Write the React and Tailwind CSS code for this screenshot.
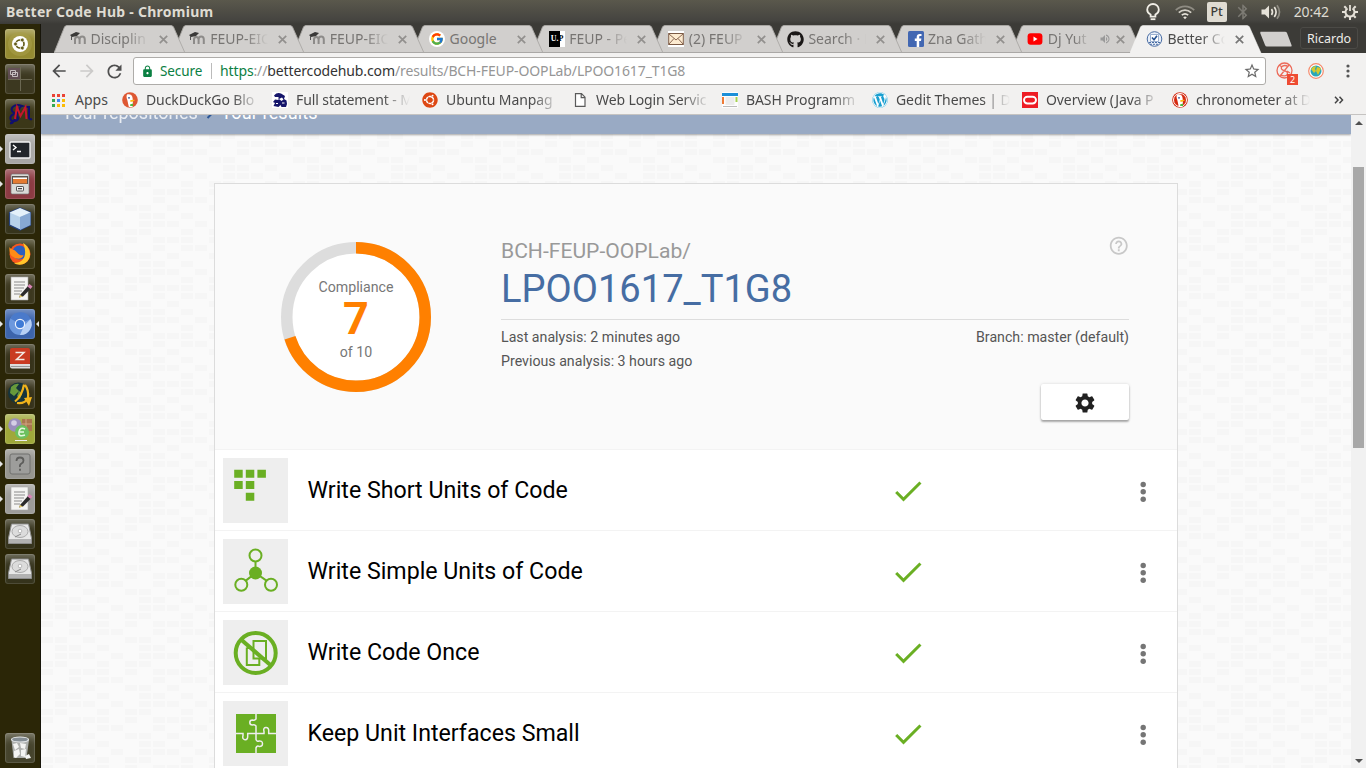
import React from "react";
import { MdArrowBack, MdArrowForward, MdRefresh, MdLock, MdStarBorder, MdSettings, MdHelpOutline, MdCheck, MdBluetooth, MdVolumeUp } from "react-icons/md";
import { FcGoogle } from "react-icons/fc";
import { FaGithub, FaWordpress, FaUbuntu } from "react-icons/fa";

const GREEN = "#6aaf23";

/* ---------- favicons ---------- */
const Moodle = () => (
  <svg width="17" height="16" viewBox="0 0 17 16" fill="none">
    <path d="M5 13V8.500Q5 6 7.200 6T9.600 8.500V13M9.600 8.500Q9.600 5.500 12.200 5.500T14.800 8.500V13" stroke="#8d8b89" strokeWidth="2" />
    <path d="M0 4L6 1l4 1-3 3-5 1z" fill="#3a3938" />
    <path d="M1.500 5V9" stroke="#555" />
  </svg>
);
const GoogleIcon = () => (
  <div className="flex size-4 items-center justify-center rounded-full bg-white"><FcGoogle size={14} /></div>
);
const UP = () => (
  <div className="flex size-4 items-center bg-[linear-gradient(90deg,#000_66%,#fff_66%)] pl-[2px] font-['Liberation_Serif',serif] text-[8px] leading-none font-bold">
    <span className="text-white">U.</span><span className="text-black">P</span>
  </div>
);
const Mail = () => (
  <svg width="16" height="16" viewBox="0 0 16 16">
    <rect width="16" height="16" fill="#fff" />
    <rect x=".7" y="2.5" width="14.6" height="11" fill="#fdebd0" stroke="#7b5a45" />
    <path d="M1 3l7 6 7-6M1 13l5-5.500M15 13l-5-5.500" fill="none" stroke="#8a6650" />
  </svg>
);
const Facebook = () => (
  <svg width="16" height="16" viewBox="0 0 16 16">
    <rect width="16" height="16" rx="1.500" fill="#4267b2" />
    <path d="M8.700 16V10H6.800V7.600h1.900V6c0-2 1.200-3.100 3-3.100h1.800v2.200h-1.200c-.9 0-1.100.5-1.100 1.100v1.400h2.200L13 10h-1.800v6z" fill="#fff" />
  </svg>
);
const YouTube = () => (
  <svg width="16" height="16" viewBox="0 0 16 16">
    <rect x=".6" y="2.300" width="14.800" height="11.400" rx="3" fill="#f00" />
    <path d="M6.500 5.600v4.800L10.500 8z" fill="#fff" />
  </svg>
);
const Better = () => (
  <svg width="17" height="16" viewBox="0 0 17 16" fill="none" stroke="#4a6da3">
    <circle cx="8.500" cy="8" r="7.300" fill="#e9eff8" />
    <path d="M4.500 3.500h8v7h-8z" fill="#fff" stroke="#9bb0d0" />
    <path d="M6 6.500l2 2.200 3-4" strokeWidth="1.600" stroke="#24508f" />
    <path d="M3 11.500h11M4 13.300h9" strokeDasharray="2 1" />
  </svg>
);
const Duck = ({ ring }) => (
  <svg width="16" height="16" viewBox="0 0 16 16">
    <circle cx="8" cy="8" r="7.800" fill={ring ? "#d5280f" : "#de5833"} />
    {ring && <circle cx="8" cy="8" r="6.500" fill="none" stroke="#fff" strokeWidth="1" />}
    <path d="M5 2.500c3-.8 5.600.7 5.700 4.200L11 14.500c-1.500.8-3 .8-4.200.3L5.300 8C4.500 6 4.200 4 5 2.500z" fill="#fff" />
    <path d="M8 8.500c1.500-1 3.500-1 5-.6-1 1.300-3 1.900-4.800 1.700z" fill="#fdb813" />
    <circle cx="7" cy="5.800" r=".9" fill="#2d4f8e" />
    <path d="M8 12.500l3-1v2.800l-3-.6z" fill="#4cba3c" />
  </svg>
);
const Dog = () => (
  <svg width="16" height="16" viewBox="0 0 16 16">
    <rect width="16" height="16" fill="#fff" />
    <path d="M2 3.500Q5 0 9 1.500l4 2.500-1 3 2.500 1.500L15 12l-1 3H9.500l-1-2-2 2-5-1 1.500-3L1 10l2-2.500 3.500.5L6.500 5 3 5z" fill="#16166b" />
    <path d="M7 7l3-1.500 1.500 2-2 1.500z" fill="#fff" />
    <path d="M4 11.500h2M10 11h2.500" stroke="#fff" />
  </svg>
);
const FileIcon = () => (
  <svg width="16" height="16" viewBox="0 0 16 16" fill="#fff" stroke="#5a5a5a" strokeWidth="1.200">
    <path d="M3.500 1.600h6l3.500 3.600v9.200H3.500zM9.200 1.600v4H13" />
  </svg>
);
const Bash = () => (
  <svg width="16" height="16" viewBox="0 0 16 16">
    <rect width="16" height="16" fill="#fdfdfd" />
    <rect y="1" width="16" height="3" fill="#1c8fd8" />
    <path d="M3.500 5h9v8h-9z" fill="#ececec" />
    <path d="M1 5v7" stroke="#ee7b37" strokeWidth="2" />
    <path d="M14.500 5v5" stroke="#a5d14f" strokeWidth="2" />
    <path d="M1 14.500h14" stroke="#bbb" />
  </svg>
);
const Oracle = () => (
  <svg width="16" height="16" viewBox="0 0 16 16">
    <rect width="16" height="16" fill="#ee1c24" />
    <rect x="2" y="4.700" width="12" height="6.800" rx="3.400" fill="none" stroke="#fff" strokeWidth="1.900" />
  </svg>
);
const Ubuntu = () => (
  <div className="flex size-4 items-center justify-center rounded-full bg-white"><FaUbuntu size={16} color="#dd4814" /></div>
);
const Wordpress = () => (
  <div className="flex size-4 items-center justify-center rounded-full bg-white"><FaWordpress size={16} color="#1a9fd0" /></div>
);

/* ---------- system bar ---------- */
function SystemBar() {
  return (
    <header className="flex h-6 shrink-0 items-center bg-[linear-gradient(#5a584c,#454440_85%,#3c3b37)] pl-[6px] font-['Noto_Sans',sans-serif] text-[#dfdbd2]">
      <span className="text-[14px] leading-none font-bold tracking-[0.270px] whitespace-nowrap">Better Code Hub - Chromium</span>
      <div className="ml-auto flex h-full items-center">
        <svg width="14" height="18" viewBox="0 0 14 18" fill="none" stroke="#f1eee6" strokeWidth="1.800" className="mr-[15px]">
          <path d="M4.600 11.500C2.500 10.500 1.200 8.800 1.200 6.800a5.800 5.800 0 0 1 11.600 0c0 2-1.300 3.700-3.400 4.700v2.200H4.600z" /><path d="M4.600 16.200h4.800" />
        </svg>
        <svg width="20" height="16" viewBox="0 0 20 16" fill="none" strokeWidth="1.700" className="mr-[12px]">
          <path d="M.8 6.200C6 1 14 1 19.200 6.200" stroke="#8f8c83" /><path d="M3.800 8.600c3.600-3.400 8.800-3.400 12.400 0" stroke="#d5d1c8" /><path d="M6.800 11.200c2-1.700 4.400-1.700 6.400 0" stroke="#e6e2d9" />
          <path d="M8.200 13.200Q10 11.800 11.800 13.200L10 15.300z" fill="#e6e2d9" />
        </svg>
        <span className="mr-[7px] flex h-[20px] w-[20px] items-center justify-center rounded-[2px] bg-[#dfdbd2] text-[12.500px] leading-none font-medium text-[#3c3b37]">Pt</span>
        <MdBluetooth size={18} color="#7d7b74" className="mr-[9px]" />
        <svg width="20" height="16" viewBox="0 0 20 16" fill="none" strokeWidth="1.700" className="mr-[13px]">
          <path d="M.5 5.500h3.500l4-4v13l-4-4H.5z" fill="#e6e2d9" /><path d="M10.500 5q2 3 0 6M13.300 3q3.600 5 0 10" stroke="#e6e2d9" /><path d="M16 1.200q5 6.800 0 13.600" stroke="#8f8c83" />
        </svg>
        <span className="mr-[13px] text-[14px] leading-none tracking-[-0.100px]">20:42</span>
        <svg width="16" height="16" viewBox="0 0 16 16" fill="none" stroke="#e6e2d9" strokeWidth="2" className="mr-[8px]">
          <path d="M5.500 4.300a4.500 4.500 0 1 0 5 0" /><path d="M8 1v6" strokeWidth="1.800" />
          <path d="M2.300 2.300l2 2M13.700 2.300l-2 2M0 8h3M16 8h-3M2.300 13.700l2-2M13.700 13.700l-2-2M8 16v-3" />
        </svg>
      </div>
    </header>
  );
}

/* ---------- launcher ---------- */
const DRIVE = (
  <g><path d="M6.500 5h17L26.500 19v5.500h-23V19z" fill="#e8e8e8" stroke="#8d8d8d" /><ellipse cx="15" cy="12.500" rx="8" ry="6" fill="#dcdcdc" stroke="#aaa" /><circle cx="15" cy="12" r="1.800" fill="#fff" stroke="#999" strokeWidth=".6" /><path d="M4 20h22v4H4z" fill="#b2b2b2" /><path d="M16 15l-6 3" stroke="#888" /></g>
);
const EDITOR = (
  <g><path d="M6 3h17v23H6z" fill="#f4f4f2" stroke="#aaa" strokeWidth=".6" /><path d="M9 8h11M9 11h11M9 14h10M9 17h8M9 20h6" stroke="#8b8b8b" strokeWidth="1" /><path d="M15 21l8-9 3 2.500-8 8-4 1z" fill="#2b2b2b" /><path d="M22.500 12.500l2-2.500 3 2.500-2 2.500z" fill="#d884b4" /><path d="M14 23.500l1-2.500 3 1.500z" fill="#ecd16b" /></g>
);
const APPS = [
  { bg: "bg-[#958b31]", art: <g><circle cx="15" cy="15" r="12" fill="#a89f4a" opacity=".6" /><circle cx="15" cy="15" r="8" fill="#fff" /><circle cx="15" cy="15" r="4" fill="none" stroke="#635b18" strokeWidth="1.700" /><g fill="#635b18" stroke="#fff" strokeWidth=".7"><circle cx="10.500" cy="15" r="1.900" /><circle cx="17.300" cy="11" r="1.900" /><circle cx="17.300" cy="19" r="1.900" /></g></g> },
  { bg: "bg-[#3c3820]", art: <g><rect x="3" y="4" width="12" height="11" fill="#66505b" opacity=".8" /><path d="M15.500 3v24M3 15.500h24" stroke="#6b6852" /><path d="M5.500 6.500h5v4h-5zM7.500 8.500h5v4h-5z" fill="#5b4a53" stroke="#cfc8ca" strokeWidth=".9" /></g> },
  { bg: "bg-[#3b3718]", art: <g fill="none"><path d="M5 24c6 2 7-16 12-17-8-3-13 3-9 6s8 8 2 9S4 17 9 15M20 8h4v11q1 2 3 1" stroke="#10106e" strokeWidth="2" /><path d="M10 20l2-12 3.500 9 5-9 1 12" stroke="#c5162c" strokeWidth="2" /></g> },
  { bg: "bg-[#a9a8a5]", run: true, art: <g><rect x="5" y="8" width="20" height="16" rx="1" fill="#22262a" stroke="#f3f3f3" strokeWidth="1.300" /><path d="M8 11l3 2.500L8 16M12 17.500h4" stroke="#fff" fill="none" strokeWidth="1.400" /></g> },
  { bg: "bg-[#8c3a42]", run: true, art: <g><rect x="6" y="5" width="18" height="20" rx="1.500" fill="#dadad7" stroke="#777" strokeWidth=".7" /><path d="M7 7h16v8H7z" fill="#59524c" /><path d="M8 10h14v4.500H8z" fill="#e37b32" /><path d="M8 9.300h14" stroke="#fff" strokeWidth="1.400" /><rect x="11.500" y="17.500" width="7" height="4.500" rx=".6" fill="#f4f4f4" stroke="#555" /><path d="M13 19.700h4" stroke="#444" strokeWidth="1.300" /></g> },
  { bg: "bg-[#36341c]", art: <g><path d="M15 4l10.500 4.500v12.500L15 26 4.500 21V8.500z" fill="#b8d2ea" stroke="#24407c" strokeWidth="1.200" /><path d="M15 4l10.500 4.500L15 13 4.500 8.500z" fill="#e4f1fa" /><path d="M15 13l10.500-4.500V21L15 26z" fill="#87a9d3" /></g> },
  { bg: "bg-[#3b3717]", art: <g><circle cx="15" cy="15" r="10.500" fill="#f7571e" /><circle cx="14.500" cy="13.500" r="7" fill="#2a5fc0" /><path d="M4.500 8c1 2.500 4 2 6 4l3 3c2 2 5 1 5 1-1 5-8 4-10 2C5 17 4 12 4.500 8z" fill="#ff8b16" /><path d="M18 4c8.500 5 9 15 3 19.500-4 3-9 2.500-12 .5 10 .5 14-9 9-20z" fill="#ffc62b" /></g> },
  { bg: "bg-[#3c381f]", art: EDITOR },
  { bg: "bg-[#3c64ac]", run: true, active: true, art: <g><circle cx="15" cy="15" r="11" fill="#6c98dd" /><path d="M15 15L5.500 9.500A11 11 0 0 1 25.500 10z" fill="#4a7acb" /><path d="M25.500 10A11 11 0 0 1 15 26l4-9z" fill="#b8d1f6" /><circle cx="15" cy="15" r="5.200" fill="#eef4fd" /><circle cx="15" cy="15" r="4" fill="#3f7bd6" /></g> },
  { bg: "bg-[#36321a]", art: <g><rect x="5" y="4" width="20" height="17" rx="2" fill="#c93a22" /><path d="M10.500 8.500h8.500L11.500 15.500h8" stroke="#f2e9e4" strokeWidth="1.500" fill="none" /><path d="M5 20h20v4.500H7Q5 24.500 5 22z" fill="#dcdcdc" /><path d="M6 22.500h19" stroke="#999" /></g> },
  { bg: "bg-[#36321a]", art: <g><circle cx="13.500" cy="14" r="10.500" fill="#16343c" /><path d="M6 8q4-4 8-3l-3 4 3 3-5 5-4-3zM14 12l3 2-2 6-3-3z" fill="#67993b" /><path d="M10 22.500Q17 17 19 5.500M12 24Q20 25 23 19Q24 11 20 6" stroke="#efb21b" strokeWidth="2.200" fill="none" /><path d="M19 19l8-1-3 9z" fill="#f3b51d" /></g> },
  { bg: "bg-[#9fa83a]", run: true, art: <g><rect x="17" y="5" width="10" height="12" fill="#aa7750" /><path d="M17 10h10M21 5v12" stroke="#d0a780" /><circle cx="10" cy="11" r="6.800" fill="#9a8fbc" /><circle cx="9" cy="9" r="2.800" fill="#d5cfe5" /><circle cx="17" cy="18" r="7" fill="#6cc060" /><path d="M20 15q-5-2.500-6 3t6 3M14 18h5" stroke="#e4f8de" strokeWidth="1.600" fill="none" /><path d="M10 26.500h12" stroke="#eee" /></g> },
  { bg: "bg-[#969590]", run: true, art: <g><rect x="5" y="5" width="20" height="20" rx="2" fill="#9d9d9b" stroke="#71716f" /><path d="M11.500 12q0-3.500 3.500-3.500t3.500 3q0 2-2 3T15 18M15 19.800v2" stroke="#5d5d5b" strokeWidth="1.800" fill="none" /></g> },
  { bg: "bg-[#9d9c99]", run: true, art: EDITOR },
  { bg: "bg-[#35331c]", art: DRIVE },
  { bg: "bg-[#35331c]", art: DRIVE },
];
const TRASH = { bg: "bg-[#45432c]", art: <g><path d="M6.500 7l2 18h13l2.500-18z" fill="#aeb0ad" /><ellipse cx="15" cy="6.500" rx="8.500" ry="2.500" fill="#858e94" stroke="#e3e6e8" strokeWidth="1.200" /><path d="M8 11l4-1 2 4-4 3zM15 10l6 1-1 5-4-1zM9 18l5-2 1 5-4 4-2-1zM16 17l5-1-1 8-4-1zM20 23l4-2 2 4-5 1z" fill="#f4f4f2" /></g> };

function LauncherTile({ app }) {
  return (
    <div className="relative flex h-[30px] w-full shrink-0 justify-center">
      {app.run && <div className="absolute top-[12px] left-0 border-y-[3px] border-l-[3px] border-y-transparent border-l-[#e4e4e4]" />}
      {app.active && <div className="absolute top-[12px] right-[1px] border-y-[3px] border-r-[3px] border-y-transparent border-r-[#e4e4e4]" />}
      <div className={`size-[30px] overflow-hidden rounded-[3px] shadow-[inset_0_0_0_1px_rgba(255,255,255,0.12),inset_0_9px_9px_-5px_rgba(255,255,255,0.35)] ${app.bg}`}>
        <svg width="30" height="30" viewBox="0 0 30 30">{app.art}</svg>
      </div>
    </div>
  );
}
function Launcher() {
  return (
    <aside className="flex w-[41px] shrink-0 flex-col gap-[5px] border-r border-[#17150a] bg-[#2b2607] pt-[5px] pb-[5px]">
      {APPS.map((a, i) => <LauncherTile key={i} app={a} />)}
      <div className="mt-auto"><LauncherTile app={TRASH} /></div>
    </aside>
  );
}

/* ---------- browser chrome ---------- */
const TABS = [
  { icon: <Moodle />, text: "Disciplin" },
  { icon: <Moodle />, text: "FEUP-EIC" },
  { icon: <Moodle />, text: "FEUP-EIC" },
  { icon: <GoogleIcon />, text: "Google", whole: true },
  { icon: <UP />, text: "FEUP - Pe" },
  { icon: <Mail />, text: "(2) FEUP" },
  { icon: <FaGithub size={17} color="#1b1817" />, text: "Search · E" },
  { icon: <Facebook />, text: "Zna Gath" },
  { icon: <YouTube />, text: "Dj Yut", audio: true },
  { icon: <Better />, text: "Better Co", active: true },
];

function Tab({ tab, index }) {
  return (
    <div className="relative flex h-[28px] w-[119.660px] shrink-0 items-center pl-[16px]" style={{ zIndex: tab.active ? 30 : 20 - index }}>
      <svg className="absolute top-0 left-0" width="132" height="28" viewBox="0 0 132 28">
        <path d="M0 28L10.500 2Q11.300 .5 13 .5H117Q118.700 .5 119.500 2L131 28z" fill={tab.active ? "#f2f1f0" : "#d1cfcd"} />
        <path d="M0 28L10.500 2Q11.300 .5 13 .5H117Q118.700 .5 119.500 2L131 28" fill="none" stroke={tab.active ? "#f8f8f7" : "#aaa8a5"} strokeWidth={tab.active ? 0.5 : 0.9} />
        {!tab.active && <path d="M0 27.500H131" stroke="#aaa8a6" />}
      </svg>
      <div className="relative flex w-full items-center">
        <div className="flex w-[17px] shrink-0 justify-center">{tab.icon}</div>
        <div className={`ml-[4px] overflow-hidden text-[14px] leading-[20px] whitespace-nowrap ${tab.whole ? "" : "[mask-image:linear-gradient(90deg,#000_60%,transparent)]"} ${tab.audio ? "w-[43px]" : "w-[58px]"} ${tab.active ? "text-[#4c4c4c]" : "text-[#777573]"}`}>{tab.text}</div>
        {tab.audio && <MdVolumeUp size={12} color="#999" className="ml-[8px] shrink-0" />}
        <svg className={`shrink-0 ${tab.audio ? "ml-[5px]" : "ml-[10px]"}`} width="9" height="9" viewBox="0 0 9 9" stroke={tab.active ? "#777" : "#92908e"} strokeWidth="1.700"><path d="M.8 .8l7.400 7.400M8.200 .8L.8 8.200" /></svg>
      </div>
    </div>
  );
}

function TabStrip() {
  return (
    <div className="flex h-[29px] shrink-0 bg-[#3c3b37] pt-px pl-[12.500px]">
      {TABS.map((t, i) => <Tab key={i} tab={t} index={i} />)}
      <svg className="mt-[6px] ml-[9px]" width="34" height="17" viewBox="0 0 34 17"><path d="M1.500 .8h24.500q1.500 0 2 1.200l4.500 12q.5 1.500-1 1.500H8q-1.500 0-2-1.500L1.200 2z" fill="#d1cfcd" /></svg>
      <div className="mt-[2px] ml-[7px] flex h-[22px] w-[58px] items-center justify-center rounded-[3px] border border-[#4b4a46] bg-[#3a3936] pt-[2px] text-[12.500px] text-[#eeece8]">Ricardo</div>
    </div>
  );
}

function Toolbar() {
  return (
    <div className="flex h-[36px] shrink-0 items-center bg-[#f2f1f0] pl-[8px]">
      <MdArrowBack size={20} color="#4f4f4f" className="mr-[8px]" />
      <MdArrowForward size={20} color="#cbcac9" className="mr-[7px]" />
      <MdRefresh size={21} color="#4f4f4f" />
      <div className="ml-[8px] flex h-[28px] w-[1133px] items-center rounded-[3px] border border-[#aeaca9] bg-white pl-[7px]">
        <MdLock size={13} color="#0b8043" />
        <span className="ml-[6px] w-[45px] text-[13.500px] tracking-[-0.100px] whitespace-nowrap text-[#0b8043]">Secure</span>
        <div className="ml-[6px] h-[16px] w-px bg-[#bbb]" />
        <span className="-mt-[2px] ml-[8px] text-[14px] tracking-[-0.120px] whitespace-nowrap text-[#969696]"><span className="text-[#0b8043]">https</span>://<span className="text-[#333]">bettercodehub.com</span>/results/BCH-FEUP-OOPLab/LPOO1617_T1G8</span>
        <MdStarBorder size={18} color="#6a6a6a" className="mr-[4px] ml-auto" />
      </div>
      <div className="relative ml-[10px] size-[18px]">
        <svg width="17" height="17" viewBox="0 0 17 17" fill="none" stroke="#ec6a59" strokeWidth="1.300"><circle cx="8.500" cy="8.500" r="7.500" /><path d="M13 3L4 14M12 4.500C8 2 3.500 5 6 7.500s6 1 5.500 4-4.500 3-7 1M3 3l3 2M14 11l-3-2" /></svg>
        <div className="absolute top-[12px] left-[11px] flex h-[11px] w-[11px] items-center justify-center bg-[#ee4b32] text-[9px] leading-none text-white">2</div>
      </div>
      <svg className="ml-[14px]" width="16" height="16" viewBox="0 0 16 16"><circle cx="8" cy="8" r="7.300" fill="#fff" stroke="#f58a6b" strokeWidth="1.200" /><circle cx="8" cy="8" r="5.500" fill="#2aa7b8" /><path d="M3 6q2-3 5-3l-1 3 1 2-2 2zM9 4l4 1-1 3-2 4-2-4z" fill="#d6c92c" /></svg>
      <svg className="ml-[22px]" width="4" height="16" viewBox="0 0 4 16" fill="#555"><circle cx="2" cy="3" r="1.600" /><circle cx="2" cy="8" r="1.600" /><circle cx="2" cy="13" r="1.600" /></svg>
    </div>
  );
}

const APP_DOTS = ["bg-[#ea4335]", "bg-[#ea4335]", "bg-[#ea4335]", "bg-[#34a853]", "bg-[#4285f4]", "bg-[#fbbc05]", "bg-[#34a853]", "bg-[#fbbc05]", "bg-[#fbbc05]"];
const MARKS = [
  { icon: <Duck />, text: "DuckDuckGo Blo" },
  { icon: <Dog />, text: "Full statement - M" },
  { icon: <Ubuntu />, text: "Ubuntu Manpag" },
  { icon: <FileIcon />, text: "Web Login Servic" },
  { icon: <Bash />, text: "BASH Programm" },
  { icon: <Wordpress />, text: "Gedit Themes | D" },
  { icon: <Oracle />, text: "Overview (Java P" },
  { icon: <Duck ring />, text: "chronometer at D" },
];
function Bookmarks() {
  return (
    <div className="flex h-[26px] shrink-0 items-center border-b border-[#c5c3c1] bg-[#f2f1f0] pb-[3px] pl-[11px] text-[14px] leading-[20px] text-[#4a4a4a]">
      <div className="grid grid-cols-3 gap-[2px]">{APP_DOTS.map((c, i) => <div key={i} className={`size-[3px] ${c}`} />)}</div>
      <span className="-mt-px ml-[10px] w-[47px]">Apps</span>
      {MARKS.map((m, i) => (
        <div key={i} className="flex w-[150px] shrink-0 items-center">
          {m.icon}
          <div className="-mt-px ml-[8px] w-[114px] overflow-hidden tracking-[-0.100px] whitespace-nowrap [mask-image:linear-gradient(90deg,#000_76%,transparent)]">{m.text}</div>
        </div>
      ))}
      <svg className="ml-[12px]" width="10" height="8" viewBox="0 0 10 8" fill="none" stroke="#444" strokeWidth="1.500"><path d="M1 .8L4 4 1 7.200M5.500 .8L8.500 4l-3 3.200" /></svg>
    </div>
  );
}

/* ---------- page ---------- */
const BRICKS = [[1, 4, 5], [0, 2, 4, 5], [1, 3, 4], [0, 1, 3, 5], [1, 2, 5], [0, 3, 4]];
function Pattern() {
  return (
    <svg className="absolute inset-0 size-full">
      <defs>
        <pattern id="bricks" width="84" height="48" patternUnits="userSpaceOnUse" x="42" y="0">
          {BRICKS.map((row, y) => row.map((x) => <rect key={`${x}-${y}`} x={x * 14} y={y * 8 + 2} width="12" height="6" fill="#f6f6f6" />))}
        </pattern>
      </defs>
      <rect width="100%" height="100%" fill="url(#bricks)" />
    </svg>
  );
}

const RULES = [
  { text: "Write Short Units of Code", art: <g fill={GREEN}><path d="M11.200 11.700h8.500v8h-8.500zM22.800 11.700h8.500v8h-8.500zM34.400 11.700h8.500v8h-8.500zM11.200 23h8.500v8h-8.500zM22.800 23h8.500v8h-8.500zM22.800 34.700h8.500v8h-8.500z" /></g> },
  { text: "Write Simple Units of Code", art: <g fill="none" stroke={GREEN} strokeWidth="2"><circle cx="32.500" cy="16.500" r="6" /><circle cx="18.300" cy="45.700" r="6" /><circle cx="48" cy="45.700" r="6" /><path d="M32.500 22.500V34M32.500 34L22.800 41.600M32.500 34L43.500 41.600" /><circle cx="32.500" cy="34" r="6.500" fill={GREEN} stroke="none" /></g> },
  { text: "Write Code Once", art: <g fill="none" stroke={GREEN}><circle cx="32.700" cy="33" r="20" strokeWidth="4" /><path d="M30.500 21h12.500v17.500H30.500zM23.800 28h6.700M23.800 27.500v17.500h12.500v-6.500" strokeWidth="2" /><path d="M18 19.500L48 45.500" strokeWidth="4" /></g> },
  { text: "Keep Unit Interfaces Small", art: <g><path d="M13 13h40v39H13z" fill={GREEN} /><path d="M33 13v5q-1.500 1.800-3.500 1-2.700 0-2.700 2.500t2.700 2.500q2-.8 3.500 1v8M13 32.500h7v2q-1 4 2 4.200t2.700-4.200v-2H41v-2q-1-4 2-4t2.700 4v2H53M33 32.500v6q1 2.500 3 1.500 3.500-.3 3.500 2.700t-3.500 2.700q-2-1-3 1.500v5" fill="none" stroke="#eee" strokeWidth="1.500" /></g> },
];

function Rule({ rule }) {
  return (
    <div className="flex h-[81px] shrink-0 items-center border-b border-[#f3f3f3] bg-white pl-[8px]">
      <svg className="bg-[#eee]" width="65" height="65" viewBox="0 0 65 65">{rule.art}</svg>
      <div className="ml-[19.500px] w-[582.500px] text-[23.180px] leading-[32px] whitespace-nowrap text-black">{rule.text}</div>
      <MdCheck size={36} color={GREEN} className="mt-[1px]" />
      <svg className="mt-[3px] ml-[214px]" width="6" height="22" viewBox="0 0 6 22" fill="#757575"><circle cx="3.200" cy="3.500" r="2.700" /><circle cx="3.200" cy="10.700" r="2.700" /><circle cx="3.200" cy="18.300" r="2.700" /></svg>
    </div>
  );
}

function Ring() {
  const c = 2 * Math.PI * 69.25;
  return (
    <div className="relative size-[150px] shrink-0">
      <svg className="absolute inset-0" width="150" height="150" viewBox="0 0 150 150">
        <circle cx="75" cy="75" r="69.250" fill="#fff" stroke="#ddd" strokeWidth="11.500" />
        <circle cx="75" cy="75" r="69.250" fill="none" stroke="#ff8000" strokeWidth="11.500" strokeDasharray={`${c * 0.7} ${c}`} transform="rotate(-90 75 75)" />
      </svg>
      <div className="relative flex h-full flex-col items-center pt-[35px] text-[14.200px] leading-[20px] text-[#777]">
        <span>Compliance</span>
        <span className="text-[45px] leading-[44px] font-bold text-[#ff8000]">7</span>
        <span className="mt-[1px]">of 10</span>
      </div>
    </div>
  );
}

function ProjectHeader() {
  return (
    <div className="flex h-[266px] shrink-0 border-b border-[#f3f3f3] bg-[#fafafa] pt-[58px] pr-[48px] pl-[66px]">
      <Ring />
      <div className="ml-[70px] flex flex-1 flex-col text-[14.200px] leading-[24px] text-[#555]">
        <div className="flex h-[78px] justify-between border-b border-[#ddd] pb-px">
          <div>
            <div className="-mt-[4px] text-[21.100px] leading-[26px] text-[#999]">BCH-FEUP-OOPLab/</div>
            <div className="mt-px text-[38.100px] leading-[48px] text-[#466da3]">LPOO1617_T1G8</div>
          </div>
          <MdHelpOutline size={21.5} color="#c8c8c8" className="-mt-[7px]" />
        </div>
        <div className="mt-[5px] flex justify-between"><span>Last analysis: 2 minutes ago</span><span>Branch: master (default)</span></div>
        <div>Previous analysis: 3 hours ago</div>
        <button className="mt-[11px] flex h-[36px] w-[88px] items-center justify-center self-end rounded-[2px] bg-white pt-[2px] shadow-[0_2px_2px_rgba(0,0,0,0.3),0_0_3px_rgba(0,0,0,0.15)]"><MdSettings size={24} color="#212121" /></button>
      </div>
    </div>
  );
}

function Page() {
  return (
    <div className="flex min-h-0 flex-1">
      <main className="relative flex w-[1310px] shrink-0 flex-col overflow-hidden bg-[#fafafa] font-[Roboto,sans-serif]">
        <Pattern />
        <nav className="relative h-[19px] shrink-0 bg-[#99aac4] shadow-[0_1px_2px_rgba(0,0,0,0.35)]">
          <div className="-mt-[12px] flex items-center pl-[21px] text-[18px] leading-[20px] text-white">
            <span className="w-[137px] opacity-80">Your repositories</span>
            <svg className="mr-[7px] ml-[7px]" width="8" height="11" viewBox="0 0 8 11" fill="none" stroke="#2c5796" strokeWidth="2"><path d="M1.500 1L6 5.500 1.500 10" /></svg>
            <span className="tracking-[0.120px]">Your results</span>
          </div>
        </nav>
        <section className="relative mt-[49px] ml-[173px] flex w-[964px] shrink-0 flex-col border border-[#dcdcdc]">
          <ProjectHeader />
          {RULES.map((r) => <Rule key={r.text} rule={r} />)}
        </section>
      </main>
      <div className="flex flex-1 flex-col items-center bg-[#f1f1f1] py-[5px]">
        <div className="mt-px border-x-[4px] border-b-[4px] border-x-transparent border-b-[#505050]" />
        <div className="mt-[42px] h-[281px] w-[11px] bg-[#a8a8a8]" />
        <div className="mt-auto border-x-[4px] border-t-[4px] border-x-transparent border-t-[#505050]" />
      </div>
    </div>
  );
}

export default function App() {
  return (
    <div className="flex h-[768px] w-[1366px] flex-col overflow-hidden">
      <SystemBar />
      <div className="flex min-h-0 flex-1">
        <Launcher />
        <div className="flex w-[1325px] shrink-0 flex-col overflow-hidden font-['Noto_Sans',sans-serif]">
          <TabStrip />
          <Toolbar />
          <Bookmarks />
          <Page />
        </div>
      </div>
    </div>
  );
}
